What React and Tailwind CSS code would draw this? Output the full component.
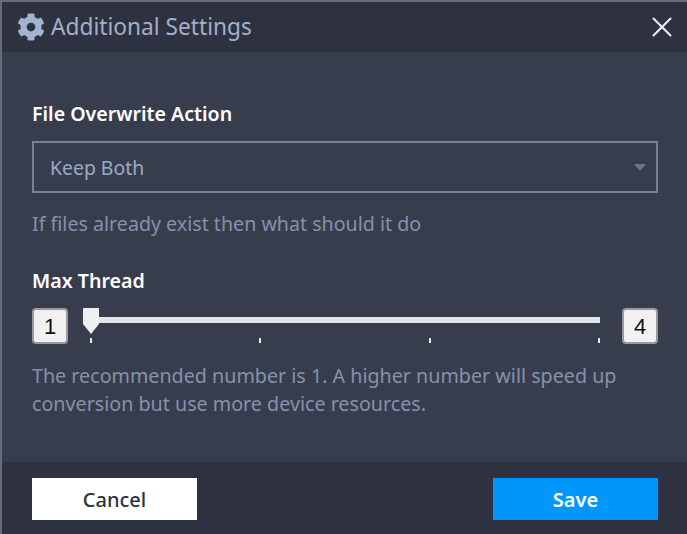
import React from 'react';
import { X } from 'lucide-react';

const font = "font-['Noto_Sans','Open_Sans',sans-serif]";

function Gear() {
  return (
    <svg width="28" height="28" viewBox="0 0 512 512" className="fill-[#a3b4d2]">
      <path d="M487.4 315.7l-42.6-24.6c4.3-23.2 4.3-47 0-70.2l42.6-24.6c4.9-2.8 7.1-8.6 5.5-14-11.1-35.6-30-67.8-54.7-94.6-3.8-4.1-10-5.1-14.8-2.3L380.8 110c-17.9-15.4-38.5-27.3-60.8-35.1V25.8c0-5.6-3.9-10.5-9.4-11.7-36.7-8.2-74.3-7.8-109.2 0-5.5 1.2-9.4 6.1-9.4 11.7V75c-22.2 7.9-42.8 19.8-60.8 35.1L88.7 85.5c-4.9-2.8-11-1.9-14.8 2.3-24.7 26.7-43.6 58.9-54.7 94.6-1.7 5.4.6 11.2 5.5 14L67.3 221c-4.3 23.2-4.3 47 0 70.2l-42.6 24.6c-4.9 2.8-7.1 8.6-5.5 14 11.1 35.6 30 67.8 54.7 94.6 3.8 4.1 10 5.1 14.8 2.3l42.6-24.6c17.9 15.4 38.5 27.3 60.8 35.1v49.2c0 5.6 3.9 10.5 9.4 11.7 36.7 8.2 74.3 7.8 109.2 0 5.5-1.2 9.4-6.1 9.4-11.7v-49.2c22.2-7.9 42.8-19.8 60.8-35.1l42.6 24.6c4.9 2.8 11 1.9 14.8-2.3 24.7-26.7 43.6-58.9 54.7-94.6 1.5-5.5-.7-11.3-5.6-14.1zM256 336c-44.1 0-80-35.9-80-80s35.9-80 80-80 80 35.9 80 80-35.9 80-80 80z" />
    </svg>
  );
}

function ValueBox({ children }) {
  return (
    <div className="w-9 h-9 shrink-0 flex items-center justify-center rounded-[4px] bg-[#f1f1f1] border-2 border-[#9a9a9e] text-[22px] text-[#111] font-['Liberation_Sans',sans-serif]">
      {children}
    </div>
  );
}

function Slider() {
  const ticks = [0, 1, 2, 3];
  return (
    <div className="relative flex-1 h-9">
      {/* track */}
      <div className="absolute left-[28px] right-[22px] top-[9px] h-[6px] bg-[#e3e5e6]" />
      {/* thumb */}
      <svg width="16" height="27" viewBox="0 0 16 27" className="absolute left-[15px] top-0">
        <path d="M1 0h14a1 1 0 0 1 1 1v15l-8 10-8-10V1a1 1 0 0 1 1-1z" fill="#efefef" />
      </svg>
      {/* ticks */}
      <div className="absolute left-[22px] right-[22px] top-[30px] flex justify-between">
        {ticks.map(t => (
          <span key={t} className="w-[2px] h-[5px] bg-[#e8ecf2]" />
        ))}
      </div>
    </div>
  );
}

export default function App() {
  return (
    <div className={`w-[687px] h-[534px] flex flex-col overflow-hidden bg-[#383d4e] border-l-2 border-t-2 border-[#666b7c] ${font}`}>
      <div className="h-[50px] shrink-0 flex items-center pl-[15px] pr-[8px] pb-[1px] bg-[#2e3240]">
        <Gear />
        <span className="ml-[6px] pt-[2px] text-[22.7px] text-[#a3b0cb]">Additional Settings</span>
        <X className="ml-auto text-[#eef0f4]" size={34} strokeWidth={1.4} />
      </div>

      <div className="flex-1 pt-[49px] pl-[30px] pr-[29px]">
        <div className="text-[19.6px] leading-[26px] font-semibold text-white">File Overwrite Action</div>
        <div className="mt-[14px] h-[52px] flex items-center justify-between pl-[16px] pr-[10px] border-2 border-[#7b808f]">
          <span className="pt-[2px] text-[19.4px] text-[#9aa9c6]">Keep Both</span>
          <span className="w-0 h-0 border-x-[6px] border-x-transparent border-t-[7px] border-t-[#6f7482]" />
        </div>
        <div className="mt-[17px] text-[19.65px] leading-[28px] text-[#8592ab]">If files already exist then what should it do</div>

        <div className="mt-[30px] text-[19.6px] leading-[26px] font-semibold text-white">Max Thread</div>
        <div className="mt-[14px] flex">
          <ValueBox>1</ValueBox>
          <Slider />
          <ValueBox>4</ValueBox>
        </div>
        <p className="mt-[18px] text-[19.7px] leading-[28px] text-[#8592ab]">
          The recommended number is 1. A higher number will speed up
          <br />
          conversion but use more device resources.
        </p>
      </div>

      <div className="h-[72px] shrink-0 flex items-center justify-between pl-[30px] pr-[29px] pt-[2px] bg-[#2e3240]">
        <button className="w-[165px] h-[42px] pt-[2px] bg-white text-[20px] font-medium text-[#2e3240]">Cancel</button>
        <button className="w-[165px] h-[42px] pt-[2px] bg-[#0096fa] text-[20px] font-semibold text-white">Save</button>
      </div>
    </div>
  );
}
